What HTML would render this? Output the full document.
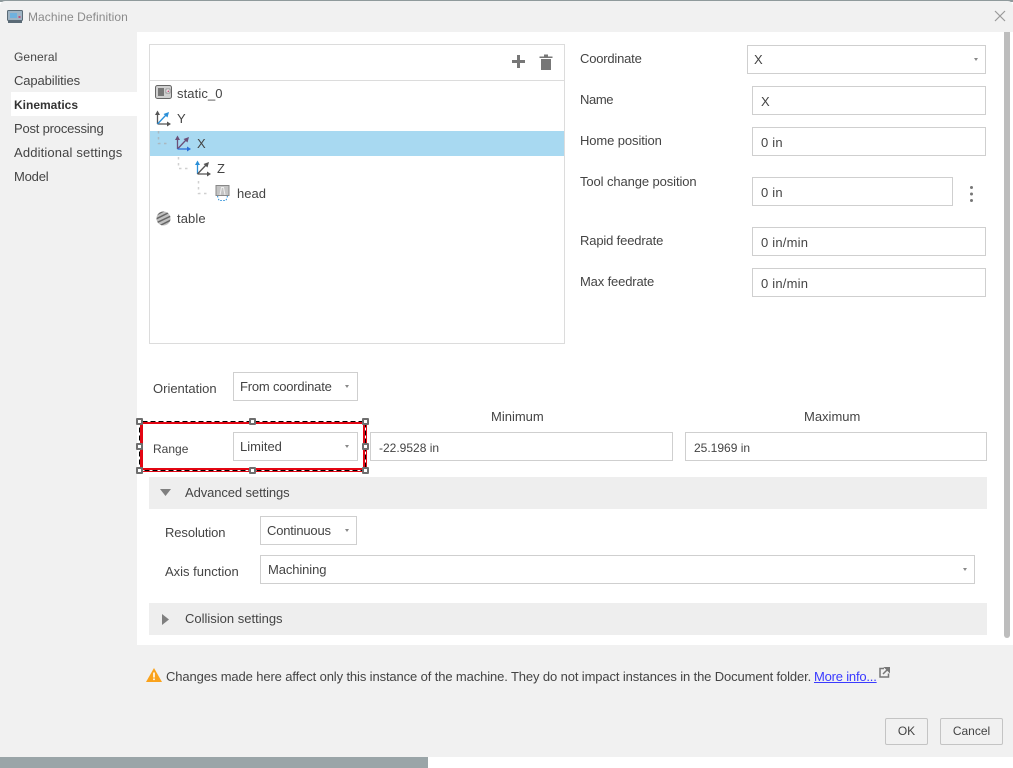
<!DOCTYPE html>
<html><head><meta charset="utf-8"><title>Machine Definition</title>
<style>
html,body{margin:0;padding:0;background:#fff;}
#root{position:relative;width:1013px;height:768px;overflow:hidden;background:#fff;font-family:"Liberation Sans",sans-serif;font-size:13px;color:#444;}
#root div,#root svg,#root a{position:absolute;}
.t{white-space:nowrap;line-height:16px;}
.box{background:#fff;border:1px solid #cfcfcf;box-sizing:border-box;}
.arr{width:0;height:0;border-left:2.5px solid transparent;border-right:2.5px solid transparent;border-top:3px solid #888;}
.h{width:3px;height:3px;background:#fff;border:2px solid #6e6e6e;border-radius:1px;}
</style></head><body>
<div id="root">
<div style="left:0;top:757px;width:428px;height:11px;background:#9aa5a8"></div>
<div style="left:0;top:0;width:1013px;height:2px;background:#8f9a9c"></div>
<div style="left:0;top:1px;width:1013px;height:756px;background:#f1f1f1;border-radius:5px 5px 0 0"></div>

<svg style="left:7px;top:10px" width="16" height="13" viewBox="0 0 16 13"><rect x="0.5" y="0.5" width="15" height="10" rx="1" fill="#9fb4c4" stroke="#5a6a76"/><rect x="3" y="3" width="7" height="5" fill="#6fb1de"/><rect x="11.5" y="6" width="2" height="2" fill="#c0507a"/><rect x="1" y="11" width="14" height="2" fill="#5a6a76"/></svg>
<div class="t" style="left:28px;top:9px;color:#8a8a8a;font-size:12px;letter-spacing:.06px">Machine Definition</div>
<svg style="left:994px;top:10px" width="12" height="12"><path d="M1 1L11 11M11 1L1 11" stroke="#9a9a9a" stroke-width="1.2"/></svg>

<div class="t" style="left:14px;top:49px;font-size:12px;letter-spacing:.1px">General</div>
<div class="t" style="left:14px;top:73px;letter-spacing:-.1px">Capabilities</div>
<div style="left:11px;top:92px;width:126px;height:24px;background:#fff"></div>
<div class="t" style="left:14px;top:97px;font-weight:bold;color:#333;font-size:12px">Kinematics</div>
<div class="t" style="left:14px;top:121px;letter-spacing:-.2px">Post processing</div>
<div class="t" style="left:14px;top:145px;letter-spacing:.15px">Additional settings</div>
<div class="t" style="left:14px;top:169px;letter-spacing:-.2px">Model</div>

<div style="left:137px;top:32px;width:876px;height:613px;background:#fff"></div>
<div style="left:1004px;top:32px;width:6px;height:606px;background:#bdbdbd;border-radius:0 0 3px 3px"></div>

<!-- tree -->
<div class="box" style="left:149px;top:44px;width:416px;height:300px;border-color:#dcdcdc"></div>
<div style="left:150px;top:80px;width:414px;height:1px;background:#dcdcdc"></div>
<svg style="left:511px;top:54px" width="15" height="15"><path d="M7.5 1V14M1 7.5H14" stroke="#777" stroke-width="3"/></svg>
<svg style="left:539px;top:54px" width="14" height="16"><path d="M0.5 2.5H13.5V4H0.5ZM5 0.5H9V2.5H5ZM2 5H12V16H2Z" fill="#777"/></svg>
<div style="left:150px;top:131px;width:414px;height:25px;background:#a8d9f1"></div>

<svg style="left:155px;top:85px" width="17" height="15" viewBox="0 0 17 15"><rect x="0.5" y="0.5" width="16" height="13" rx="2" fill="#d0d0d0" stroke="#666"/><rect x="3" y="3" width="6" height="8" fill="#777"/><rect x="11" y="4" width="4" height="4" fill="#fff" stroke="#777" stroke-width="0.7"/><rect x="12.5" y="5.5" width="1.5" height="1.5" fill="#c0507a"/></svg>
<div class="t" style="left:177px;top:86px;letter-spacing:.1px">static_0</div>

<svg style="left:155px;top:110px" width="17" height="17"><path d="M2.500 14V3M2.500 14H12" stroke="#555" stroke-width="1.300" fill="none"/><path d="M2.500 14L11 5" stroke="#2a8fd8" stroke-width="1.300"/><path d="M0 5L2.500 .5L5 5Z" fill="#555"/><path d="M12 11.500L16 14L12 16.500Z" fill="#555"/><path d="M8.500 4L14 2L12.500 7.500Z" fill="#2a8fd8"/></svg>
<div class="t" style="left:177px;top:111px">Y</div>

<svg style="left:157px;top:126px" width="60" height="80"><path d="M1.500 5V17.500H11" stroke="#aab8c0" stroke-width="1.500" stroke-dasharray="2.500 3.500" fill="none"/><path d="M21.500 31V42.500H31M41.500 55V67.500H51" stroke="#d0d0d0" stroke-width="1.500" stroke-dasharray="2.500 3.500" fill="none"/></svg>

<svg style="left:175px;top:135px" width="17" height="17"><path d="M2.500 14V3M2.500 14L11 5" stroke="#6b4f78" stroke-width="1.300" fill="none"/><path d="M2.500 14H12" stroke="#2a6fd8" stroke-width="1.300"/><path d="M0 5L2.500 .5L5 5Z" fill="#6b4f78"/><path d="M12 11.500L16 14L12 16.500Z" fill="#2a6fd8"/><path d="M8.500 4L14 2L12.500 7.500Z" fill="#6b4f78"/></svg>
<div class="t" style="left:197px;top:136px">X</div>

<svg style="left:195px;top:160px" width="17" height="17"><path d="M2.500 14V3" stroke="#2a8fd8" stroke-width="1.300"/><path d="M2.500 14L11 5M2.500 14H12" stroke="#555" stroke-width="1.300" fill="none"/><path d="M0 5L2.500 .5L5 5Z" fill="#2a8fd8"/><path d="M12 11.500L16 14L12 16.500Z" fill="#555"/><path d="M8.500 4L14 2L12.500 7.500Z" fill="#555"/></svg>
<div class="t" style="left:217px;top:161px">Z</div>

<svg style="left:215px;top:185px" width="16" height="17"><rect x="1" y="0.500" width="13" height="10" fill="#c4c4c4" stroke="#888"/><path d="M5 10L6.500 2.500H8.500L10 10" stroke="#eee" fill="none"/><path d="M2.500 11L4 15.500H11L12.500 11" stroke="#2a8fd8" stroke-dasharray="1.500 1.500" fill="none"/></svg>
<div class="t" style="left:237px;top:186px">head</div>

<svg style="left:156px;top:211px" width="15" height="15"><defs><clipPath id="c"><circle cx="7.500" cy="7.500" r="7"/></clipPath></defs><circle cx="7.500" cy="7.500" r="7" fill="#c0c0c0"/><path clip-path="url(#c)" d="M0 4L8 0M0 8L14 1M0 12L15 5M3 15L15 9" stroke="#666" stroke-width="1.500"/></svg>
<div class="t" style="left:177px;top:211px;letter-spacing:.1px">table</div>

<!-- right form -->
<div class="t" style="left:580px;top:51px;letter-spacing:-.2px">Coordinate</div>
<div class="box" style="left:747px;top:45px;width:239px;height:29px"></div>
<div class="t" style="left:754px;top:52px">X</div>
<div class="arr" style="left:974px;top:58px"></div>

<div class="t" style="left:580px;top:92px;letter-spacing:-.4px">Name</div>
<div class="box" style="left:752px;top:86px;width:234px;height:29px"></div>
<div class="t" style="left:761px;top:94px">X</div>

<div class="t" style="left:580px;top:133px;letter-spacing:-.1px">Home position</div>
<div class="box" style="left:752px;top:127px;width:234px;height:29px"></div>
<div class="t" style="left:761px;top:135px;letter-spacing:.2px">0 in</div>

<div class="t" style="left:580px;top:174px;letter-spacing:-.1px">Tool change position</div>
<div class="box" style="left:752px;top:177px;width:201px;height:29px"></div>
<div class="t" style="left:761px;top:185px;letter-spacing:.2px">0 in</div>
<svg style="left:969px;top:185px" width="5" height="18"><circle cx="2.500" cy="2.500" r="1.500" fill="#777"/><circle cx="2.500" cy="9" r="1.500" fill="#777"/><circle cx="2.500" cy="15.500" r="1.500" fill="#777"/></svg>

<div class="t" style="left:580px;top:233px;letter-spacing:-.15px">Rapid feedrate</div>
<div class="box" style="left:752px;top:227px;width:234px;height:29px"></div>
<div class="t" style="left:761px;top:235px;letter-spacing:.2px">0 in/min</div>

<div class="t" style="left:580px;top:274px;letter-spacing:-.15px">Max feedrate</div>
<div class="box" style="left:752px;top:268px;width:234px;height:29px"></div>
<div class="t" style="left:761px;top:276px;letter-spacing:.2px">0 in/min</div>

<!-- orientation -->
<div class="t" style="left:153px;top:381px">Orientation</div>
<div class="box" style="left:233px;top:372px;width:125px;height:29px"></div>
<div class="t" style="left:240px;top:379px;letter-spacing:-.2px">From coordinate</div>
<div class="arr" style="left:345px;top:385px"></div>

<div class="t" style="left:491px;top:409px">Minimum</div>
<div class="t" style="left:804px;top:409px">Maximum</div>

<div class="t" style="left:153px;top:441px;font-size:12px">Range</div>
<div class="box" style="left:233px;top:432px;width:125px;height:29px"></div>
<div class="t" style="left:240px;top:439px">Limited</div>
<div class="arr" style="left:345px;top:445px"></div>
<div class="box" style="left:370px;top:432px;width:303px;height:29px"></div>
<div class="t" style="left:379px;top:440px;font-size:12px">-22.9528 in</div>
<div class="box" style="left:685px;top:432px;width:302px;height:29px"></div>
<div class="t" style="left:694px;top:440px;font-size:12px">25.1969 in</div>

<!-- red selection -->
<div style="left:139px;top:421px;width:220px;height:44px;border:solid #e30613;border-width:3px 4px 4px 4px"></div>
<svg style="left:139px;top:421px" width="228" height="51"><rect x="0.500" y="0.500" width="226" height="49" fill="none" stroke="#000" stroke-width="1"/><rect x="0.500" y="0.500" width="226" height="49" fill="none" stroke="#fff" stroke-width="1" stroke-dasharray="3 5"/></svg>
<div class="h" style="left:136px;top:418px"></div>
<div class="h" style="left:249px;top:418px"></div>
<div class="h" style="left:362px;top:418px"></div>
<div class="h" style="left:136px;top:443px"></div>
<div class="h" style="left:362px;top:443px"></div>
<div class="h" style="left:136px;top:467px"></div>
<div class="h" style="left:249px;top:467px"></div>
<div class="h" style="left:362px;top:467px"></div>

<!-- advanced -->
<div style="left:149px;top:477px;width:838px;height:32px;background:#eeeeee"></div>
<svg style="left:160px;top:489px" width="11" height="7"><path d="M0 0H11L5.500 7Z" fill="#7f7f7f"/></svg>
<div class="t" style="left:185px;top:485px;letter-spacing:-.1px">Advanced settings</div>

<div class="t" style="left:165px;top:525px;letter-spacing:-.1px">Resolution</div>
<div class="box" style="left:260px;top:516px;width:97px;height:29px"></div>
<div class="t" style="left:267px;top:523px;letter-spacing:-.2px">Continuous</div>
<div class="arr" style="left:345px;top:529px"></div>

<div class="t" style="left:165px;top:564px">Axis function</div>
<div class="box" style="left:260px;top:555px;width:715px;height:29px"></div>
<div class="t" style="left:268px;top:562px;letter-spacing:-.1px">Machining</div>
<div class="arr" style="left:963px;top:568px"></div>

<div style="left:149px;top:603px;width:838px;height:32px;background:#eeeeee"></div>
<svg style="left:162px;top:614px" width="7" height="11"><path d="M0 0V11L7 5.500Z" fill="#7f7f7f"/></svg>
<div class="t" style="left:185px;top:611px">Collision settings</div>

<!-- footer -->
<svg style="left:146px;top:668px" width="16" height="14"><path d="M8 0L16 14H0Z" fill="#faa21b"/><rect x="7.200" y="4.500" width="1.600" height="5" fill="#fff"/><rect x="7.200" y="10.500" width="1.600" height="1.600" fill="#fff"/></svg>
<div class="t" style="left:166px;top:669px;letter-spacing:-.12px">Changes made here affect only this instance of the machine. They do not impact instances in the Document folder.</div>
<a class="t" href="#" style="left:814px;top:669px;color:#3a3aff;text-decoration:underline;letter-spacing:-.2px">More info...</a>
<svg style="left:879px;top:667px" width="11" height="11"><path d="M5 1.500H1V10H9.500V6.500" stroke="#777" stroke-width="1.500" fill="none"/><path d="M4 7L9 2M6 0.500H10.500V5Z" stroke="#777" stroke-width="1.500" fill="#777"/></svg>

<div style="left:885px;top:718px;width:43px;height:27px;border:1px solid #c4c4c4;border-radius:2px;box-sizing:border-box;text-align:center;line-height:25px;font-size:12px">OK</div>
<div style="left:940px;top:718px;width:63px;height:27px;border:1px solid #c4c4c4;border-radius:2px;box-sizing:border-box;text-align:center;line-height:25px;font-size:12px">Cancel</div>
</div>
</body></html>
